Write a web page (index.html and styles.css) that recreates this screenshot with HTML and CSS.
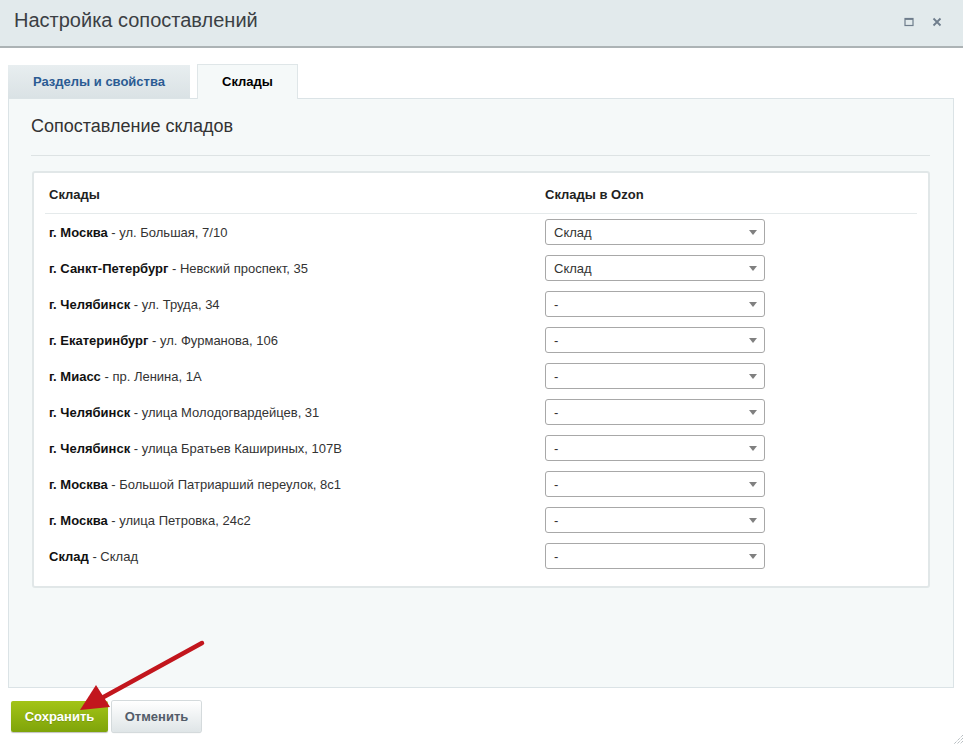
FILE: index.html
```html
<!DOCTYPE html>
<html lang="ru">
<head>
<meta charset="utf-8">
<title>Настройка сопоставлений</title>
<link rel="stylesheet" href="styles.css">
</head>
<body>
<div class="dialog">
  <div class="titlebar">
    <div class="title">Настройка сопоставлений</div>
    <div class="title-icons">
      <svg class="ico" width="10" height="10" viewBox="0 0 10 10"><rect x="1" y="1.5" width="8" height="7" fill="none" stroke="#6f7d8c" stroke-width="1.2"/><line x1="1" y1="2.2" x2="9" y2="2.2" stroke="#6f7d8c" stroke-width="1.4"/></svg>
      <svg class="ico" width="10" height="10" viewBox="0 0 10 10"><path d="M1.5 1.5 L8.5 8.5 M8.5 1.5 L1.5 8.5" stroke="#6f7d8c" stroke-width="1.8"/></svg>
    </div>
  </div>

  <div class="body">
    <div class="tabs">
      <div class="tab">Разделы и свойства</div>
      <div class="tab active">Склады</div>
    </div>
    <div class="panel">
      <h2 class="heading">Сопоставление складов</h2>
      <div class="rule"></div>
      <div class="card">
        <div class="grid">
          <div class="th">Склады</div>
          <div class="th th2">Склады в Ozon</div>

          <div class="td"><span><b>г. Москва</b> - ул. Большая, 7/10</span></div>
          <div class="td td2"><div class="select">Склад<span class="arrow"></span></div></div>

          <div class="td"><span><b>г. Санкт-Петербург</b> - Невский проспект, 35</span></div>
          <div class="td td2"><div class="select">Склад<span class="arrow"></span></div></div>

          <div class="td"><span><b>г. Челябинск</b> - ул. Труда, 34</span></div>
          <div class="td td2"><div class="select">-<span class="arrow"></span></div></div>

          <div class="td"><span><b>г. Екатеринбург</b> - ул. Фурманова, 106</span></div>
          <div class="td td2"><div class="select">-<span class="arrow"></span></div></div>

          <div class="td"><span><b>г. Миасс</b> - пр. Ленина, 1А</span></div>
          <div class="td td2"><div class="select">-<span class="arrow"></span></div></div>

          <div class="td"><span><b>г. Челябинск</b> - улица Молодогвардейцев, 31</span></div>
          <div class="td td2"><div class="select">-<span class="arrow"></span></div></div>

          <div class="td"><span><b>г. Челябинск</b> - улица Братьев Кашириных, 107В</span></div>
          <div class="td td2"><div class="select">-<span class="arrow"></span></div></div>

          <div class="td"><span><b>г. Москва</b> - Большой Патриарший переулок, 8с1</span></div>
          <div class="td td2"><div class="select">-<span class="arrow"></span></div></div>

          <div class="td"><span><b>г. Москва</b> - улица Петровка, 24с2</span></div>
          <div class="td td2"><div class="select">-<span class="arrow"></span></div></div>

          <div class="td"><span><b>Склад</b> - Склад</span></div>
          <div class="td td2"><div class="select">-<span class="arrow"></span></div></div>
        </div>
      </div>
    </div>
  </div>

  <div class="buttons">
    <button class="btn save">Сохранить</button>
    <button class="btn cancel">Отменить</button>
  </div>

  <svg class="pointer" width="140" height="80" viewBox="0 0 140 80">
    <line x1="126" y1="6" x2="24" y2="62" stroke="#c2161d" stroke-width="4.5" stroke-linecap="round"/>
    <polygon points="4,73 20,48 34,70" fill="#c2161d"/>
  </svg>

  <svg class="grip" width="10" height="10" viewBox="0 0 10 10">
    <path d="M10 1 L1 10 M10 4 L4 10 M10 7 L7 10" stroke="#9aa3a8" stroke-width="1" stroke-dasharray="1 1"/>
  </svg>
</div>
</body>
</html>
```
FILE: styles.css
```css
html, body {
  margin: 0;
  padding: 0;
  background: #fff;
}
body {
  font-family: "Liberation Sans", Arial, sans-serif;
  color: #333;
}
.dialog {
  position: relative;
  width: 963px;
  height: 744px;
  overflow: hidden;
  background: #fff;
}
.titlebar {
  height: 46px;
  background: #e2eaec;
  border-bottom: 2px solid #acb3b5;
  display: flex;
  align-items: center;
  justify-content: space-between;
  padding: 0 21px 0 14px;
  box-sizing: content-box;
}
.title {
  font-size: 20px;
  color: #3b3f44;
  margin-top: -6px;
}
.title-icons {
  display: flex;
  gap: 18px;
  align-items: center;
  margin-top: -2px;
}
.ico { display: block; }
.body {
  padding: 16px 9px 0 8px;
}
.tabs {
  display: flex;
  gap: 7px;
  height: 34px;
  align-items: flex-end;
}
.tab {
  height: 33px;
  line-height: 33px;
  font-size: 13px;
  font-weight: bold;
  text-align: center;
  box-sizing: border-box;
}
.tab:first-child {
  width: 182px;
  color: #2b5b93;
  background: linear-gradient(#e8eef0, #dae2e5);
}
.tab.active {
  width: 101px;
  height: 35px;
  line-height: 34px;
  color: #000;
  background: #f5f9f9;
  border: 1px solid #dfe6e8;
  border-bottom: none;
  position: relative;
  z-index: 1;
  margin-bottom: -1px;
}
.panel {
  height: 590px;
  box-sizing: border-box;
  background: #f5f9f9;
  border: 1px solid #dbe3e6;
  padding: 14px 23px 0 22px;
}
.heading {
  margin: 0;
  font-size: 18px;
  font-weight: normal;
  color: #333;
  line-height: 26px;
}
.rule {
  height: 1px;
  background: #dde3e4;
  margin: 16px 0 15px 0;
}
.card {
  margin-left: 1px;
  background: #fff;
  border: 2px solid #e1e7e8;
  border-radius: 3px;
  padding: 0 11px 12px 11px;
}
.grid {
  display: grid;
  grid-template-columns: 500px 1fr;
  font-size: 13px;
  color: #333;
}
.th {
  font-weight: bold;
  height: 40px;
  line-height: 44px;
  padding-left: 4px;
  border-bottom: 1px solid #e5eaeb;
  color: #222;
}
.td {
  height: 36px;
  display: flex;
  align-items: center;
  padding-left: 4px;
}
.th2, .td2 { padding-left: 0; }
.td b { font-weight: bold; color: #111; }
.select {
  position: relative;
  width: 220px;
  height: 26px;
  box-sizing: border-box;
  border: 1px solid #a8a8a8;
  border-radius: 3px;
  background: #fff;
  line-height: 25px;
  padding-left: 8px;
  color: #333;
  margin-top: -1px;
}
.arrow {
  position: absolute;
  right: 7px;
  top: 10px;
  width: 0;
  height: 0;
  border-left: 4px solid transparent;
  border-right: 4px solid transparent;
  border-top: 5px solid #808080;
}
.buttons {
  display: flex;
  gap: 4px;
  padding: 13px 0 0 11px;
}
.btn {
  height: 31px;
  font-family: "Liberation Sans", Arial, sans-serif;
  font-size: 13px;
  font-weight: bold;
  border-radius: 2px;
  cursor: pointer;
}
.save {
  width: 97px;
  color: #fff;
  border: none;
  background: linear-gradient(#a3c417, #7fa40a);
  box-shadow: 0 1px 1px rgba(0,0,0,0.25);
  text-shadow: 0 1px 0 rgba(0,0,0,0.15);
}
.cancel {
  width: 89px;
  color: #535c69;
  border: none;
  background: linear-gradient(#ffffff, #dfe5e7);
  box-shadow: 0 0 0 1px #d4dadc, 0 1px 1px rgba(0,0,0,0.2);
}
.pointer {
  position: absolute;
  left: 76px;
  top: 637px;
}
.grip {
  position: absolute;
  right: 0;
  bottom: 0;
}
```
